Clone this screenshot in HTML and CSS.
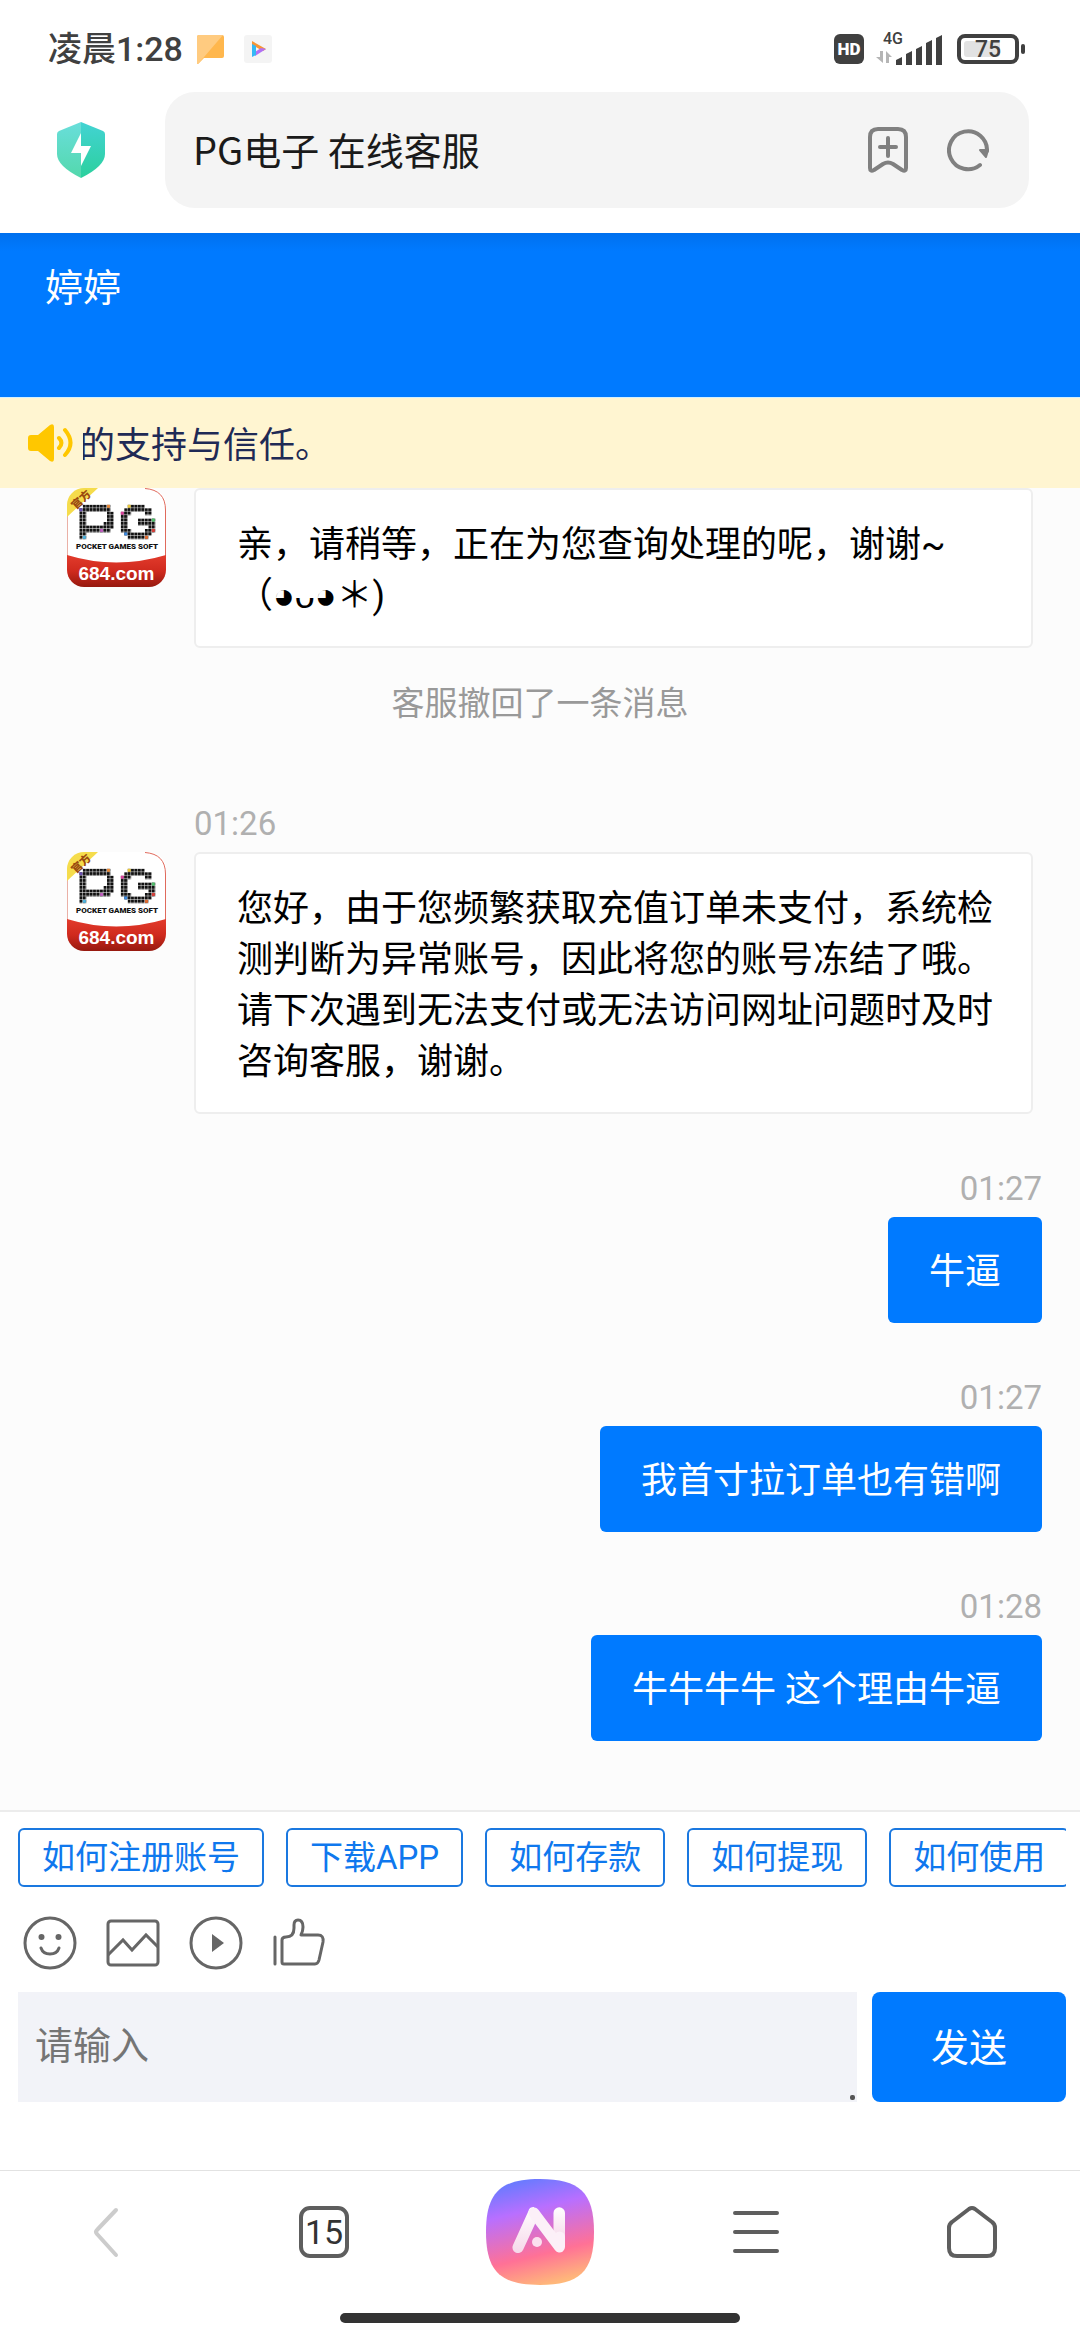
FILE: index.html
```html
<!DOCTYPE html>
<html lang="zh-CN">
<head>
<meta charset="utf-8">
<meta name="viewport" content="width=device-width, initial-scale=1">
<title>PG电子 在线客服</title>
<link rel="stylesheet" href="styles.css">
</head>
<body>
<svg class="defs" width="0" height="0" aria-hidden="true">
  <defs>
    <pattern id="dots" width="3.45" height="3.45" patternUnits="userSpaceOnUse">
      <rect width="3" height="3" fill="#111"/>
    </pattern>
    <linearGradient id="ribbon" x1="0" y1="0" x2="0" y2="1">
      <stop offset="0" stop-color="#e23b2c"/><stop offset=".5" stop-color="#d02a1e"/><stop offset="1" stop-color="#96190f"/>
    </linearGradient>
    <clipPath id="tile"><rect width="99" height="99" rx="17"/></clipPath>
    <symbol id="pg" viewBox="0 0 99 99">
      <g clip-path="url(#tile)">
        <rect width="99" height="99" fill="#fff"/>
        <path d="M78 .5Q98.500 2 98.500 22V72" fill="none" stroke="#e06a5c"/>
        <path d="M.5 28V72" stroke="#eab0a6"/>
        <path d="M0 0H31L0 29Z" fill="#f5dc4c"/>
        <path d="M0 67Q49 82 99 67V99H0Z" fill="url(#ribbon)"/>
      </g>
      <g transform="translate(12.400 16.800)">
        <path d="M3.450 0H31.050V6.900H34.500V24.150H31.050V27.600H6.900V34.500H0V3.450H3.450ZM6.900 6.900V20.700H24.150V17.250H27.600V6.900Z" fill="url(#dots)" fill-rule="evenodd"/>
        <path d="M27.600 0h3v3h-3z" fill="#e58a3c"/><path d="M0 3.450h3v3h-3z" fill="#6a4fb0"/><path d="M20.700 24.150h3v3h-3z" fill="#c05fc0"/><path d="M3.450 31.050h3v3h-3z" fill="#4fb4e0"/>
      </g>
      <g transform="translate(53.800 16.800)">
        <path d="M6.900 0H24.150V3.450H31.050V10.350H24.150V6.900H10.350V10.350H6.900V24.150H10.350V27.600H24.150V24.150H27.600V20.700H17.250V13.800H34.500V27.600H31.050V31.050H27.600V34.500H6.900V31.050H3.450V27.600H0V6.900H3.450V3.450H6.900Z" fill="url(#dots)"/>
        <path d="M6.900 0h3v3h-3z" fill="#e8c63c"/><path d="M0 6.900h3v3h-3z" fill="#d8409a"/><path d="M31.050 13.800h3v3h-3z" fill="#4fbf6a"/><path d="M31.050 24.150h3v3h-3z" fill="#d8403a"/><path d="M3.450 27.600h3v3h-3z" fill="#3c8ae0"/><path d="M24.150 31.050h3v3h-3z" fill="#e06a30"/>
      </g>
      <text class="pg-cn" x="15" y="16" text-anchor="middle" transform="rotate(-43 14 13)">官方</text>
      <text class="pg-sub" x="50" y="61" text-anchor="middle">POCKET GAMES SOFT</text>
      <text class="pg-url" x="49.500" y="92" text-anchor="middle">684.com</text>
    </symbol>
  </defs>
</svg>

<header class="browser">
  <div class="status">
    <span class="clock">凌晨1:28</span>
    <svg class="st-note" width="27" height="29" viewBox="0 0 27 29"><path d="M2 0H25Q27 0 27 2V21Q27 23 25 23H7L1 29Q0 29 0 28V2Q0 0 2 0Z" fill="#ffb74d"/><path d="M2 0H26L1 29Q0 29 0 28V2Q0 0 2 0Z" fill="#ffcb80"/></svg>
    <svg class="st-play" width="28" height="28" viewBox="0 0 28 28"><rect width="28" height="28" rx="3" fill="#f4f4f4"/><path d="M8 6L22 14L19 16L8 10Z" fill="#f79434"/><path d="M22 14L11 21V17L17 13Z" fill="#b070f5"/><path d="M8 9L12 11V20L8 22Z" fill="#33b8f5"/></svg>
    <span class="spacer"></span>
    <span class="hd">HD</span>
    <svg class="st-signal" width="68" height="38" viewBox="0 0 68 38">
      <text class="net" x="7" y="14">4G</text>
      <path d="M4 21H7V33L0 27H4ZM10 33V21L16 27H13V33Z" fill="#b5b5b5"/>
      <path d="M20 30L26 27V35H20ZM30 24L36 21V35H30ZM40 19L46 16V35H40ZM50 13L56 10V35H50ZM60 8L66 5V35H60Z" fill="#404040"/>
    </svg>
    <svg class="st-battery" width="68" height="30" viewBox="0 0 68 30"><rect x="2" y="2" width="58" height="26" rx="6" fill="#fff" stroke="#404040" stroke-width="4"/><rect x="7" y="7" width="36" height="16" rx="3" fill="#e2e2e2"/><rect x="64" y="10" width="4" height="10" rx="2" fill="#404040"/><text class="level" x="31" y="23" text-anchor="middle">75</text></svg>
  </div>
  <div class="address-row">
    <svg class="shield" width="48" height="56" viewBox="0 0 48 56"><defs><linearGradient id="sl" x1="0" y1="0" x2="0" y2="1"><stop offset="0" stop-color="#69dedb"/><stop offset="1" stop-color="#53d8ac"/></linearGradient><linearGradient id="sr" x1="0" y1="0" x2="0" y2="1"><stop offset="0" stop-color="#43d3d3"/><stop offset="1" stop-color="#2bd09d"/></linearGradient></defs><path d="M24 0L2 9Q0 10 0 12V32Q0 44 24 56Z" fill="url(#sl)"/><path d="M24 0L46 9Q48 10 48 12V32Q48 44 24 56Z" fill="url(#sr)"/><path d="M24 11L14 31H24V44L34 24H24Z" fill="#fff"/></svg>
    <div class="address">
      <span class="page-title">PG电子 在线客服</span>
      <button class="icon-btn" aria-label="收藏"><svg width="40" height="46" viewBox="0 0 40 46" fill="none" stroke="#808080" stroke-width="4" stroke-linecap="round" stroke-linejoin="round"><path d="M10 2H30Q38 2 38 10V41Q38 45 34 43L25 37Q20 34 15 37L6 43Q2 45 2 41V10Q2 2 10 2ZM12 20H28M20 11V29"/></svg></button>
      <button class="icon-btn" aria-label="刷新"><svg width="42" height="44" viewBox="0 0 42 44" fill="none" stroke="#808080" stroke-width="4" stroke-linecap="round"><path d="M33 37A19 19 0 1 1 40 23"/><path d="M33 22H41L39 29Z" fill="#808080" stroke-width="2" stroke-linejoin="round"/></svg></button>
    </div>
  </div>
</header>

<div class="agent-bar"><h1 class="agent-name">婷婷</h1></div>

<div class="notice">
  <svg width="45" height="38" viewBox="0 0 45 38"><path d="M3 11H10L22 1Q26 -1 26 3V35Q26 39 22 37L10 27H3Q0 27 0 24V14Q0 11 3 11Z" fill="#ffc700"/><path d="M31 14Q36 19 31 24M37 6Q48 19 37 31" fill="none" stroke="#ffc700" stroke-width="4" stroke-linecap="round"/></svg>
  <p class="notice-text">的支持与信任。</p>
</div>

<main class="chat">
  <article class="msg agent first">
    <svg class="avatar" viewBox="0 0 99 99" role="img" aria-label="PG"><use href="#pg"/></svg>
    <p class="bubble">亲，请稍等，正在为您查询处理的呢，谢谢~（◕ᴗ◕＊)</p>
  </article>
  <p class="recall">客服撤回了一条消息</p>
  <article class="msg agent">
    <time class="time">01:26</time>
    <svg class="avatar" viewBox="0 0 99 99" role="img" aria-label="PG"><use href="#pg"/></svg>
    <p class="bubble">您好，由于您频繁获取充值订单未支付，系统检测判断为异常账号，因此将您的账号冻结了哦。请下次遇到无法支付或无法访问网址问题时及时咨询客服，谢谢。</p>
  </article>
  <article class="msg mine"><time class="time">01:27</time><p class="bubble">牛逼</p></article>
  <article class="msg mine"><time class="time">01:27</time><p class="bubble">我首寸拉订单也有错啊</p></article>
  <article class="msg mine"><time class="time">01:28</time><p class="bubble">牛牛牛牛 这个理由牛逼</p></article>
</main>

<section class="composer">
  <div class="chips">
    <button class="chip">如何注册账号</button>
    <button class="chip">下载APP</button>
    <button class="chip">如何存款</button>
    <button class="chip">如何提现</button>
    <button class="chip">如何使用</button>
  </div>
  <div class="tools">
    <button class="icon-btn" aria-label="表情"><svg width="54" height="54" viewBox="0 0 54 54" fill="none" stroke="#666" stroke-width="3" stroke-linecap="round"><circle cx="27" cy="27" r="25"/><path d="M18 32Q20 38 27 38T36 32"/><circle cx="18.500" cy="21" r="3" fill="#666" stroke="none"/><circle cx="35.500" cy="21" r="3" fill="#666" stroke="none"/></svg></button>
    <button class="icon-btn" aria-label="图片"><svg width="54" height="54" viewBox="0 0 54 54" fill="none" stroke="#666" stroke-width="3"><rect x="2" y="5" width="50" height="44" rx="3"/><path d="M2 39L17 24L26 34L40 19L52 31"/></svg></button>
    <button class="icon-btn" aria-label="视频"><svg width="54" height="54" viewBox="0 0 54 54" fill="none" stroke="#666" stroke-width="3"><circle cx="27" cy="27" r="25"/><path d="M23 18L35 27L23 36Z" fill="#666" stroke="none"/></svg></button>
    <button class="icon-btn" aria-label="评价"><svg width="54" height="54" viewBox="0 0 54 54" fill="none" stroke="#666" stroke-width="3" stroke-linecap="round" stroke-linejoin="round"><path d="M3 21V48M10 24Q10 21 14 21Q22 21 22 12V9Q22 4 26 4Q31 4 31 11Q31 15 29 19H46Q52 19 51 26L47 44Q46 48 43 48H12Q10 48 10 46Z"/></svg></button>
  </div>
  <div class="entry">
    <div class="field">
      <textarea class="input" rows="1" placeholder="请输入" aria-label="请输入"></textarea>
      <span class="grip"></span>
    </div>
    <button class="send">发送</button>
  </div>
</section>

<nav class="toolbar">
  <button class="icon-btn" aria-label="后退"><svg width="50" height="54" viewBox="0 0 50 54" fill="none" stroke="#ccc" stroke-width="4" stroke-linecap="round" stroke-linejoin="round"><path d="M33 5L14 25Q12 27 14 29L33 50"/></svg></button>
  <button class="icon-btn" aria-label="标签页"><span class="tabs">15</span></button>
  <button class="icon-btn" aria-label="AI"><svg width="108" height="106" viewBox="0 0 108 106"><defs><linearGradient id="ai" x1=".3" y1="0" x2=".55" y2="1"><stop offset="0" stop-color="#647bff"/><stop offset=".3" stop-color="#b86fff"/><stop offset=".72" stop-color="#ff7196"/><stop offset="1" stop-color="#ffb87a"/></linearGradient><linearGradient id="leg" x1="0" y1="0" x2="0" y2="1"><stop offset="0" stop-color="#fff"/><stop offset="1" stop-color="#f6d8ea"/></linearGradient></defs><path d="M54 0C93 0 108 13 108 53S93 106 54 106S0 93 0 53S15 0 54 0Z" fill="url(#ai)"/><path d="M48 28C43 28 43 31 42 33L27 66A5.500 5.500 0 0 0 37 71L49 45Z" fill="url(#leg)"/><path d="M67.500 34A5.500 5.500 0 0 1 79 34V62H74L67.500 55Z" fill="url(#leg)"/><path d="M48 34L73.500 68V58" fill="none" stroke="#fcf0f8" stroke-width="11" stroke-linecap="round" stroke-linejoin="round"/><circle cx="51" cy="63" r="5" fill="#fbe0ef"/></svg></button>
  <button class="icon-btn" aria-label="菜单"><svg width="46" height="54" viewBox="0 0 46 54" stroke="#5e5e5e" stroke-width="4" stroke-linecap="round"><path d="M2 8H44M2 27H44M2 46H44"/></svg></button>
  <button class="icon-btn" aria-label="主页"><svg width="50" height="54" viewBox="0 0 50 54" fill="none" stroke="#5e5e5e" stroke-width="4" stroke-linejoin="round"><path d="M22 4Q25 2 28 4L45 17Q48 19 48 23V43Q48 51 40 51H10Q2 51 2 43V23Q2 19 5 17Z"/></svg></button>
</nav>
<div class="home-indicator"></div>
</body>
</html>
```
FILE: styles.css
```css
*, *::before, *::after { box-sizing: border-box; }

body {
  margin: 0;
  min-height: 100vh;
  display: flex;
  flex-direction: column;
  background: #fff;
  font-family: Roboto, "Noto Sans CJK SC", sans-serif;
  font-size: 36px;
  color: #000;
}

h1, p { margin: 0; font-weight: 400; }
svg { display: block; flex: none; }
button { font: inherit; border: 0; padding: 0; background: none; cursor: pointer; }
.defs { position: absolute; }
.icon-btn { display: flex; align-items: center; justify-content: center; }

/* phone status bar and address bar */
.status {
  display: flex;
  align-items: center;
  height: 92px;
  padding: 6px 55px 0 48px;
  color: #404040;
}
.clock { font-size: 34px; font-weight: 500; line-height: 44px; }
.st-note { margin-left: 14px; }
.st-play { margin-left: 20px; }
.spacer { flex: 1; }
.hd {
  width: 30px;
  border-radius: 6px;
  background: #404040;
  color: #fff;
  font: 900 17px/30px Roboto, sans-serif;
  text-align: center;
}
.st-signal { margin-left: 12px; }
.st-battery { margin-left: 13px; }
.net { font: 500 16px Roboto, sans-serif; fill: #404040; }
.level { font: 500 23px Roboto, sans-serif; fill: #404040; }

.address-row {
  display: flex;
  align-items: center;
  gap: 60px;
  padding: 0 51px 25px 57px;
}
.address {
  flex: 1;
  display: flex;
  align-items: center;
  gap: 39px;
  min-height: 116px;
  padding: 0 40px 0 28px;
  border-radius: 30px;
  background: #f4f4f4;
}
.page-title {
  flex: 1;
  padding-bottom: 2px;
  font-family: "Noto Sans CJK SC", sans-serif;
  font-size: 38px;
  line-height: 52px;
  color: #1a1a1a;
}

/* chat header */
.agent-bar {
  height: 165px;
  padding: 28px 45px;
  background: linear-gradient(#0070ee, #007aff 18px);
  border-bottom: 1px solid #d4f0ff;
}
.agent-name { font-size: 38px; line-height: 54px; color: #fff; }

.notice {
  display: flex;
  align-items: center;
  gap: 10px;
  min-height: 90px;
  padding: 0 28px;
  background: #fff5d1;
  color: #1f2a55;
}
.notice-text {
  flex: 1;
  padding-top: 6px;
  overflow: hidden;
  white-space: nowrap;
  text-indent: -4px;
  line-height: 54px;
}

/* messages */
.chat {
  flex: 1;
  padding-bottom: 67px;
  background: #fcfcfc;
}
.msg { margin-top: 55px; line-height: 51px; }
.time { font-size: 33px; line-height: 40px; color: #b0b0b0; }
.bubble { border-radius: 6px; }

.agent {
  display: grid;
  grid-template-columns: 99px 1fr;
  column-gap: 28px;
  row-gap: 8px;
  padding: 0 47px 0 67px;
}
.agent.first { margin-top: 0; }
.agent .time { grid-column: 2; }
.agent .bubble {
  padding: 30px 36px 24px 41px;
  border: 2px solid #eee;
  background: #fff;
}
.avatar { width: 99px; height: 99px; }

.mine {
  display: flex;
  flex-direction: column;
  align-items: flex-end;
  gap: 8px;
  padding: 0 38px;
}
.mine .bubble {
  padding: 30px 41px 25px;
  background: #007aff;
  color: #fff;
}

.recall {
  margin: 34px 0 78px;
  text-align: center;
  font-size: 33px;
  line-height: 44px;
  color: #999;
}
.recall + .msg { margin-top: 0; }

.pg-cn { font: 900 11px "Noto Sans CJK SC", sans-serif; fill: #9a4a10; }
.pg-sub { font: 900 8px Roboto, sans-serif; fill: #111; }
.pg-url { font: 700 19px "Liberation Sans", sans-serif; fill: #fff; }

/* composer */
.composer {
  padding: 16px 14px 68px 18px;
  border-top: 2px solid #ececec;
}
.chips { display: flex; gap: 22px; overflow: hidden; }
.chip {
  flex: none;
  padding: 0 22px;
  border: 2px solid #1a78e0;
  border-radius: 6px;
  font-size: 33px;
  line-height: 55px;
  color: #0f78ee;
  white-space: nowrap;
}
.tools { display: flex; gap: 29px; padding: 29px 6px 22px 5px; }
.entry { display: flex; gap: 15px; }
.field { position: relative; flex: 1; display: flex; }
.input {
  flex: 1;
  height: 110px;
  padding: 27px 17px;
  border: 0;
  background: #f2f3f8;
  font: inherit;
  font-size: 38px;
  line-height: 54px;
  resize: none;
}
.input::placeholder { color: #757575; }
.grip {
  position: absolute;
  right: 2px;
  bottom: 2px;
  width: 5px;
  height: 5px;
  border-radius: 2px;
  background: #555;
}
.send {
  width: 194px;
  padding-bottom: 6px;
  border-radius: 8px;
  background: #007aff;
  color: #fff;
  font-size: 38px;
}

/* browser toolbar */
.toolbar {
  display: grid;
  grid-template-columns: repeat(5, 1fr);
  align-items: center;
  padding: 8px 0 28px;
  border-top: 1px solid #e2e2e2;
}
.tabs {
  width: 50px;
  border: 4px solid #5e5e5e;
  border-radius: 11px;
  font-size: 34px;
  line-height: 44px;
  text-align: center;
  color: #333;
}
.home-indicator {
  width: 37%;
  height: 10px;
  margin: 0 auto 17px;
  border-radius: 5px;
  background: #333;
}
```
